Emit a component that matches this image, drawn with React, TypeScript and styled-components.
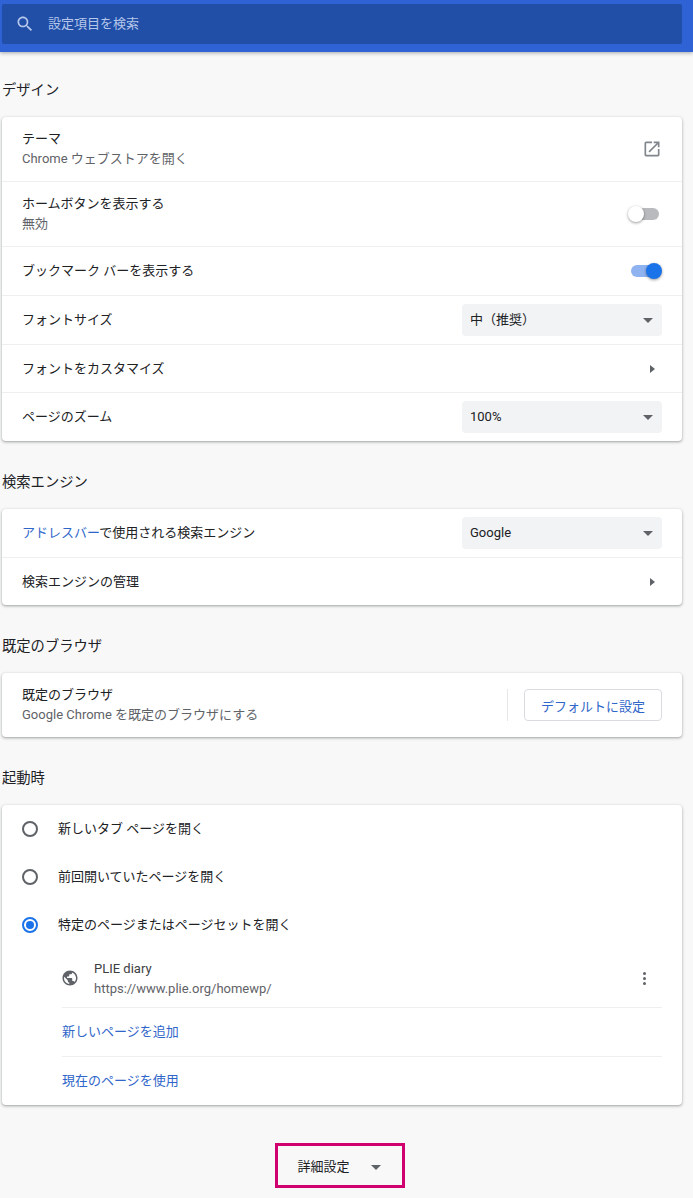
import React from "react";
import styled, { createGlobalStyle } from "styled-components";

const GlobalStyle = createGlobalStyle`
  html, body {
    margin: 0;
    padding: 0;
    height: 1198px;
    overflow: hidden;
    background: #f8f8f9;
    font-family: Roboto, "Noto Sans CJK JP", sans-serif;
    font-size: 13px;
    color: #202124;
  }
`;

const Header = styled.header`
  height: 52px;
  box-sizing: border-box;
  padding: 4px 11px 8px 2px;
  background: #2f62d4;
  box-shadow: 0 1px 4px rgba(60, 64, 67, 0.45);
`;

const SearchBox = styled.div`
  height: 40px;
  display: flex;
  align-items: center;
  gap: 13px;
  padding-left: 13px;
  border-radius: 2px;
  background: #214fa8;
  color: #b5c7ea;
  font-size: 13px;
`;

const Main = styled.main`
  padding: 11px 11px 0 2px;
`;

const SectionTitle = styled.h2`
  height: 54px;
  box-sizing: border-box;
  margin: 14px 0 0;
  padding-bottom: 3px;
  display: flex;
  align-items: center;
  font-size: 14.3px;
  font-weight: 400;
  color: #202124;
  &:first-child {
    margin-top: 0;
  }
`;

const Card = styled.section`
  background: #fff;
  border-radius: 4px;
  box-shadow: 0 1px 2px rgba(60, 64, 67, 0.3), 0 1px 3px 1px rgba(60, 64, 67, 0.15);
`;

const Row = styled.div<{ $h: number; $last?: boolean }>`
  height: ${({ $h }) => $h}px;
  box-sizing: border-box;
  display: flex;
  align-items: center;
  justify-content: space-between;
  padding: 0 20px;
  border-bottom: ${({ $last }) => ($last ? "none" : "1px solid #eeeff0")};
`;

const Text = styled.span<{ $lift?: number }>`
  margin-bottom: ${({ $lift }) => $lift ?? 4}px;
`;

const Label = styled.div`
  display: flex;
  flex-direction: column;
  gap: 1px;
  margin-bottom: 2px;
  line-height: 19px;
`;

const Sub = styled.span`
  color: #5f6368;
`;

const Blue = styled.span`
  color: #2f66c9;
`;

const SelectBox = styled.div`
  width: 200px;
  height: 32px;
  box-sizing: border-box;
  display: flex;
  align-items: center;
  justify-content: space-between;
  padding: 0 9px 0 8px;
  background: #f1f3f4;
  border-radius: 4px;
`;

const ArrowDown = styled.span`
  width: 0;
  height: 0;
  border-left: 5px solid transparent;
  border-right: 5px solid transparent;
  border-top: 5px solid #5f6368;
`;

const ArrowRight = styled.span`
  width: 0;
  height: 0;
  margin-right: 7px;
  border-top: 4.5px solid transparent;
  border-bottom: 4.5px solid transparent;
  border-left: 5px solid #5f6368;
`;

const Track = styled.span<{ $on?: boolean }>`
  position: relative;
  width: 29px;
  height: 12px;
  margin-right: ${({ $on }) => ($on ? "2px" : "3px")};
  border-radius: 6px;
  background: ${({ $on }) => ($on ? "#8fb3f0" : "#b8babd")};
`;

const Knob = styled.span<{ $on?: boolean }>`
  position: absolute;
  top: -2px;
  left: ${({ $on }) => ($on ? "15px" : "-2px")};
  width: 16px;
  height: 16px;
  border-radius: 50%;
  background: ${({ $on }) => ($on ? "#1a73e8" : "#fff")};
  box-shadow: 0 1px 3px rgba(0, 0, 0, 0.4);
`;

const Toggle = ({ on }: { on?: boolean }) => (
  <Track $on={on}>
    <Knob $on={on} />
  </Track>
);

const DefaultActions = styled.div`
  display: flex;
  align-items: center;
  gap: 16px;
`;

const Separator = styled.span`
  width: 1px;
  height: 32px;
  background: #e4e6e8;
`;

const OutlineButton = styled.button`
  width: 138px;
  height: 32px;
  padding: 0;
  background: #fff;
  border: 1px solid #dadce0;
  border-radius: 4px;
  color: #2f66c9;
  font: inherit;
`;

const RadioRow = styled.div`
  height: 48px;
  display: flex;
  align-items: center;
  gap: 20px;
  padding-left: 20px;
`;

const RadioMark = styled.span<{ $on?: boolean }>`
  width: 16px;
  height: 16px;
  box-sizing: border-box;
  display: flex;
  align-items: center;
  justify-content: center;
  border: 2px solid ${({ $on }) => ($on ? "#1a73e8" : "#5f6368")};
  border-radius: 50%;
  &::after {
    content: "";
    display: ${({ $on }) => ($on ? "block" : "none")};
    width: 8px;
    height: 8px;
    border-radius: 50%;
    background: #1a73e8;
  }
`;

const StartupList = styled.div`
  margin-left: 60px;
  margin-right: 20px;
`;

const PageRow = styled.div`
  height: 59px;
  box-sizing: border-box;
  display: flex;
  align-items: center;
  border-bottom: 1px solid #eeeff0;
`;

const GlobeWrap = styled.span`
  display: flex;
  margin-left: -1px;
`;

const PageText = styled.div`
  flex: 1;
  display: flex;
  flex-direction: column;
  gap: 1px;
  margin-left: 15px;
  font-size: 13px;
  line-height: 19px;
  color: #3c4043;
`;

const LinkRow = styled.div<{ $h: number; $last?: boolean }>`
  height: ${({ $h }) => $h}px;
  box-sizing: border-box;
  display: flex;
  align-items: center;
  color: #2f66c9;
  border-bottom: ${({ $last }) => ($last ? "none" : "1px solid #eeeff0")};
`;

const Dots = styled.span`
  display: flex;
  flex-direction: column;
  gap: 2px;
  margin-right: 16px;
  & > i {
    width: 3px;
    height: 3px;
    border-radius: 50%;
    background: #5f6368;
  }
`;

const AdvancedWrap = styled.div`
  display: flex;
  justify-content: center;
  margin-top: 38px;
  padding-right: 4px;
`;

const AdvancedBox = styled.div`
  width: 130px;
  height: 45px;
  box-sizing: border-box;
  display: flex;
  align-items: center;
  justify-content: center;
  gap: 21px;
  padding: 3px 2px 0 0;
  border: 3px solid #d1006f;
`;

const Icon = ({ d, size, fill }: { d: string; size: number; fill: string }) => (
  <svg width={size} height={size} viewBox="0 0 24 24" fill={fill}>
    <path d={d} />
  </svg>
);

const SEARCH =
  "M15.5 14h-.79l-.28-.27C15.41 12.59 16 11.11 16 9.5 16 5.91 13.09 3 9.5 3S3 5.91 3 9.5 5.91 16 9.5 16c1.61 0 3.09-.59 4.23-1.57l.27.28v.79l5 4.99L20.49 19l-4.99-5zm-6 0C7.01 14 5 11.99 5 9.5S7.01 5 9.5 5 14 7.01 14 9.5 11.99 14 9.5 14z";
const OPEN_IN_NEW =
  "M19 19H5V5h7V3H5c-1.11 0-2 .9-2 2v14c0 1.1.89 2 2 2h14c1.1 0 2-.9 2-2v-7h-2v7zM14 3v2h3.59l-9.83 9.83 1.41 1.41L19 6.41V10h2V3h-7z";
const GLOBE =
  "M12 2C6.48 2 2 6.48 2 12s4.48 10 10 10 10-4.48 10-10S17.52 2 12 2zm-1 17.93c-3.95-.49-7-3.85-7-7.93 0-.62.08-1.21.21-1.79L9 15v1c0 1.1.9 2 2 2v1.93zm6.9-2.54c-.26-.81-1-1.39-1.9-1.39h-1v-3c0-.55-.45-1-1-1H8v-2h2c.55 0 1-.45 1-1V7h2c1.1 0 2-.9 2-2v-.41c2.93 1.19 5 4.06 5 7.41 0 2.08-.8 3.97-2.1 5.39z";

const Select = ({ value, lift }: { value: string; lift?: number }) => (
  <SelectBox>
    <Text $lift={lift}>{value}</Text>
    <ArrowDown />
  </SelectBox>
);

const App: React.FC = () => (
  <>
    <GlobalStyle />
    <Header>
      <SearchBox>
        <Icon d={SEARCH} size={20} fill="#b5c7ea" />
        <Text>設定項目を検索</Text>
      </SearchBox>
    </Header>
    <Main>
      <SectionTitle>デザイン</SectionTitle>
      <Card>
        <Row $h={65}>
          <Label>
            テーマ
            <Sub>Chrome ウェブストアを開く</Sub>
          </Label>
          <Icon d={OPEN_IN_NEW} size={20} fill="#80868b" />
        </Row>
        <Row $h={65}>
          <Label>
            ホームボタンを表示する
            <Sub>無効</Sub>
          </Label>
          <Toggle />
        </Row>
        <Row $h={49}>
          <Text>ブックマーク バーを表示する</Text>
          <Toggle on />
        </Row>
        <Row $h={49}>
          <Text>フォントサイズ</Text>
          <Select value="中（推奨）" />
        </Row>
        <Row $h={48}>
          <Text $lift={2}>フォントをカスタマイズ</Text>
          <ArrowRight />
        </Row>
        <Row $h={48} $last>
          <Text>ページのズーム</Text>
          <Select value="100%" lift={2} />
        </Row>
      </Card>

      <SectionTitle>検索エンジン</SectionTitle>
      <Card>
        <Row $h={49}>
          <Text>
            <Blue>アドレスバー</Blue>で使用される検索エンジン
          </Text>
          <Select value="Google" lift={1} />
        </Row>
        <Row $h={47} $last>
          <Text $lift={2}>検索エンジンの管理</Text>
          <ArrowRight />
        </Row>
      </Card>

      <SectionTitle>既定のブラウザ</SectionTitle>
      <Card>
        <Row $h={64} $last>
          <Label>
            既定のブラウザ
            <Sub>Google Chrome を既定のブラウザにする</Sub>
          </Label>
          <DefaultActions>
            <Separator />
            <OutlineButton>デフォルトに設定</OutlineButton>
          </DefaultActions>
        </Row>
      </Card>

      <SectionTitle>起動時</SectionTitle>
      <Card>
        <RadioRow>
          <RadioMark />
          <Text>新しいタブ ページを開く</Text>
        </RadioRow>
        <RadioRow>
          <RadioMark />
          <Text>前回開いていたページを開く</Text>
        </RadioRow>
        <RadioRow>
          <RadioMark $on />
          <Text>特定のページまたはページセットを開く</Text>
        </RadioRow>
        <StartupList>
          <PageRow>
            <GlobeWrap>
              <Icon d={GLOBE} size={18} fill="#5f6368" />
            </GlobeWrap>
            <PageText>
              PLIE diary
              <Sub>https://www.plie.org/homewp/</Sub>
            </PageText>
            <Dots>
              <i />
              <i />
              <i />
            </Dots>
          </PageRow>
          <LinkRow $h={49}>
            <Text>新しいページを追加</Text>
          </LinkRow>
          <LinkRow $h={48} $last>
            <Text>現在のページを使用</Text>
          </LinkRow>
        </StartupList>
      </Card>

      <AdvancedWrap>
        <AdvancedBox>
          <Text>詳細設定</Text>
          <ArrowDown />
        </AdvancedBox>
      </AdvancedWrap>
    </Main>
  </>
);

export default App;
